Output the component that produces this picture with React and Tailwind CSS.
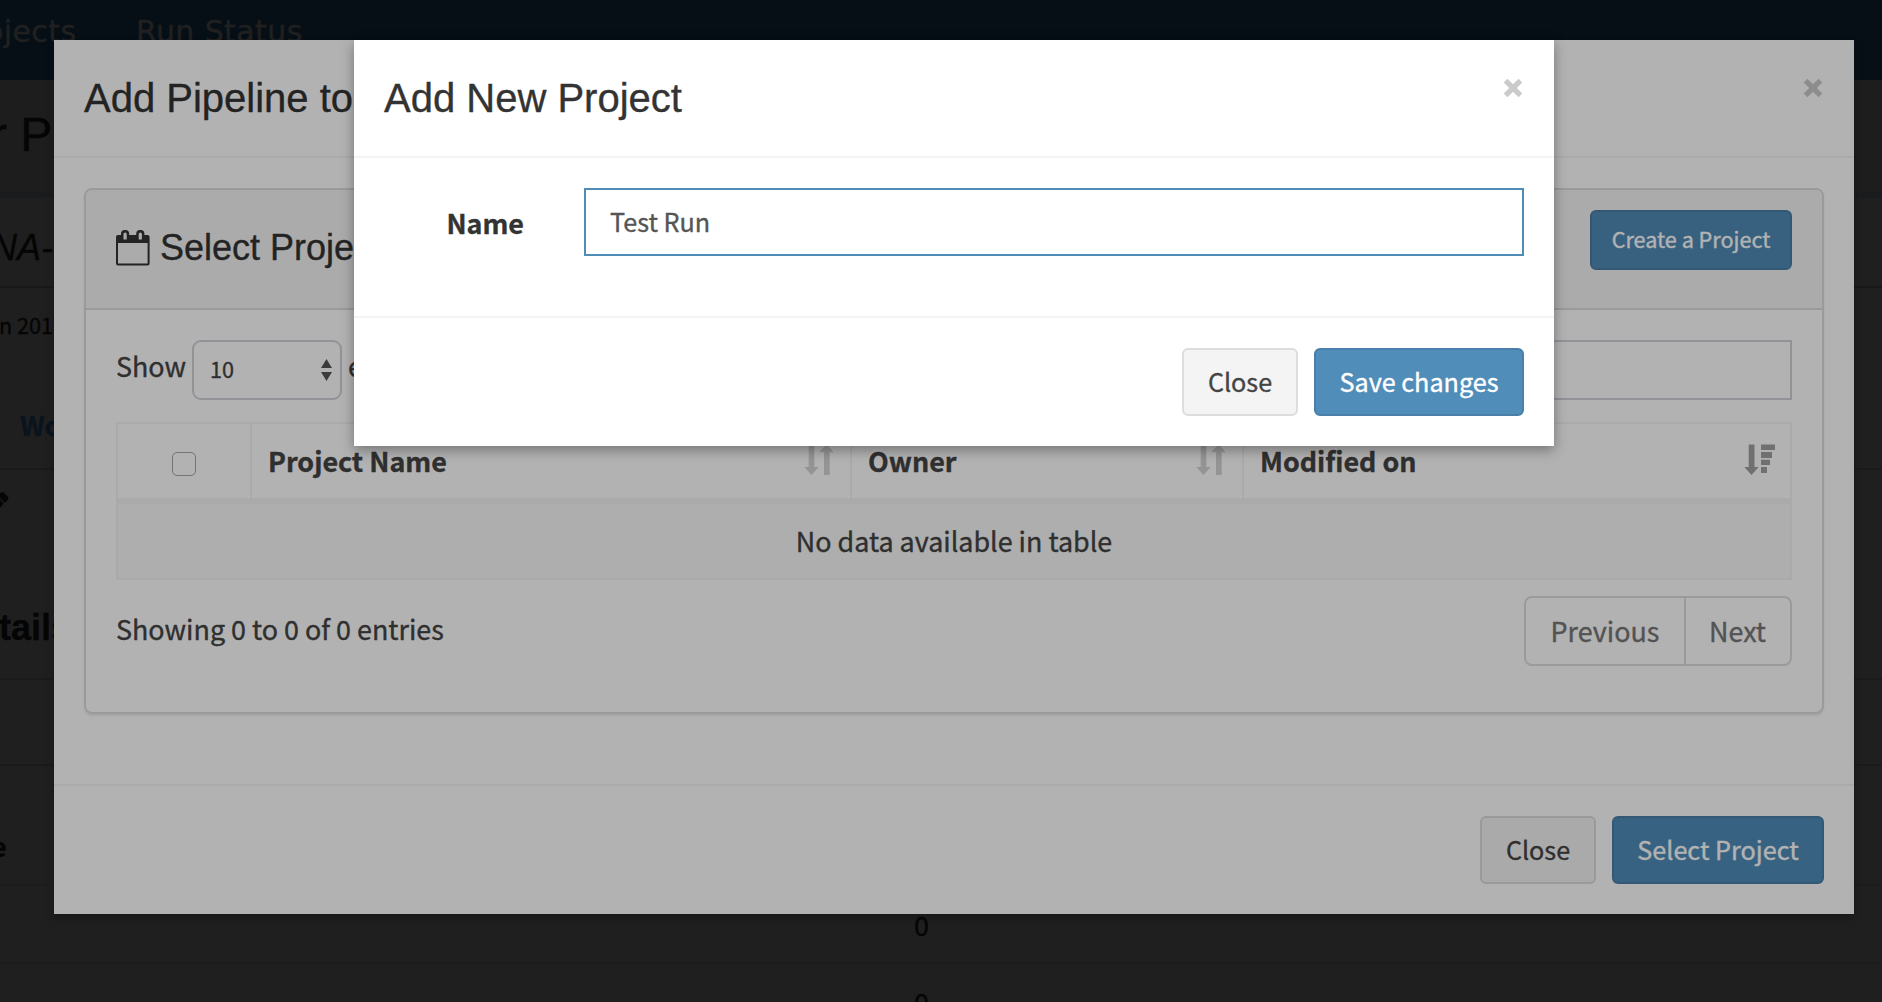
const body = "font-['Noto_Sans_CJK_SC','Noto_Sans',sans-serif]";
const heading = "font-['Liberation_Sans',Arial,sans-serif]";

function CloseIcon() {
  return (
    <svg width="20" height="20" viewBox="0 0 20 20" className="mt-[8px] mr-[1px]">
      <path d="M2.600 2.600 L17.400 17.400 M17.400 2.600 L2.600 17.400" stroke="#cbcbcb" strokeWidth="5.400" strokeLinecap="butt" />
    </svg>
  );
}

function CalendarIcon() {
  return (
    <svg width="34" height="36" viewBox="0 0 34 36" className="mr-[10px]">
      <path
        fill="#333"
        fillRule="evenodd"
        d="M2 5h3V4a4.1 4.1 0 0 1 8.2 0v1h7V4a4.1 4.1 0 0 1 8.2 0v1h3.2a2 2 0 0 1 2 2v26.600a2 2 0 0 1-2 2H2a2 2 0 0 1-2-2V7a2 2 0 0 1 2-2zM2 13v20.500h29.600V13zM7.500 4v5.500h3.200V4a1.600 1.600 0 0 0-3.200 0zM22.700 4v5.500h3.200V4a1.600 1.600 0 0 0-3.200 0z"
      />
    </svg>
  );
}

function SortIcon() {
  return (
    <svg width="30" height="31" viewBox="0 0 30 31" fill="#d4d4d4" className="mr-[2px] mb-[4px]">
      <path d="M4.700 0h5.600v23h4.500L7.500 31 .300 23h4.400z" />
      <path d="M22.500 0l7.200 8.300h-4V31H20V8.300h-4.700z" />
    </svg>
  );
}

function SortDescIcon() {
  return (
    <svg width="31" height="31" viewBox="0 0 31 31" fill="#a1a1a1" className="mb-[4px]">
      <path d="M4.700.500h5.800V23h4.200L7.500 31 .300 23h4.400z" />
      <path d="M17 .500h14V6H17zM17 8h11v6H17zM17 15.700h9V21H17zM17 23h6v6h-6z" />
    </svg>
  );
}

function Page() {
  return (
    <div className="flex h-[1002px] w-full flex-col overflow-hidden bg-[#2d2d2d] whitespace-nowrap text-[#080808]">
      <div className="flex h-20 shrink-0 bg-[#0a1620] font-['DejaVu_Sans',Verdana,sans-serif] text-[30px] leading-[63px] tracking-[0.4px] text-[#2f2f2f]">
        <span className="-ml-[15px] w-[151px] shrink-0">ojects</span>
        <span>Run Status</span>
      </div>
      <div className={`h-28 shrink-0 bg-[#2a2a2a] pr-2 text-[48px] leading-[110px] ${heading}`}>
        <span className="-ml-[9px]">r P</span>
      </div>
      <div className="h-[6px] shrink-0 bg-[#26282a]" />
      <div className={`h-[90px] shrink-0 border-b-2 border-[#242424] text-[36px] leading-[99px] italic ${heading}`}>
        <span className="-ml-[9px]">NA-</span>
      </div>
      <div className={`flex h-[182px] shrink-0 flex-col border-b-2 border-[#262626] ${body}`}>
        <span className="mt-[17px] -ml-[1px] text-[21.6px] leading-10">n 201</span>
        <span className="mt-[60px] pl-5 text-[26.9px] leading-10 font-bold text-[#0f1c2b]">Wo</span>
      </div>
      <div className="flex h-[210px] shrink-0 flex-col border-b-2 border-[#262626]">
        <svg width="10" height="20" viewBox="0 0 10 20" className="mt-[20px]" fill="#080808">
          <path d="M0 3.500L1.500 2.300Q2.800 1.500 4 2.700L8 6.800Q9 8.200 8 9.400L4.700 13L0 8z" />
          <path d="M0 9.500L3.500 13.500L0 18z" />
        </svg>
        <span className={`mt-[98px] -ml-[1px] text-[36px] leading-10 font-bold ${heading}`}>tails</span>
      </div>
      <div className="h-[86px] shrink-0 border-b-2 border-[#262626]" />
      <div className={`h-[120px] shrink-0 border-b-2 border-[#2a2a2a] text-[26.9px] leading-[160px] font-bold ${body}`}>
        <span className="-ml-[9px]">e</span>
      </div>
      <div className={`h-[78px] shrink-0 border-b-2 border-[#2a2a2a] pl-[914px] text-[26.9px] leading-[77px] ${body}`}>0</div>
      <div className={`h-[76px] shrink-0 pl-[914px] text-[26.9px] leading-[76px] ${body}`}>0</div>
    </div>
  );
}

function ModalHeader({ title }) {
  return (
    <div className="flex h-[118px] justify-between border-b-2 border-[#f4f4f4] px-[30px] pt-[30px]">
      <h4 className={`text-[40px] leading-[56px] text-[#333] ${heading}`}>{title}</h4>
      <CloseIcon />
    </div>
  );
}

function ModalFooter({ action, actionWidth }) {
  return (
    <div className="flex h-[130px] justify-end gap-4 border-t-2 border-[#f4f4f4] px-[30px] pt-[30px] text-[25.2px]">
      <button className="flex h-[68px] w-[116px] items-center justify-center rounded-md border-2 border-[#ddd] bg-[#f4f4f4] text-[#444]">
        Close
      </button>
      <button className={`flex h-[68px] items-center justify-center rounded-md border-2 border-[#497fa9] bg-[#508db9] text-white ${actionWidth}`}>
        {action}
      </button>
    </div>
  );
}

function HeadCell({ children, icon }) {
  return (
    <div className="flex h-[74px] items-center justify-between border-r-2 border-[#f4f4f4] pr-[14px] pl-4 font-bold last:border-r-0 last:pr-[15px]">
      {children}
      {icon}
    </div>
  );
}

function ProjectTable() {
  return (
    <div className="mt-[22px] border-2 border-[#f4f4f4]">
      <div className="grid grid-cols-[134px_600px_392px_1fr] border-b-[6px] border-[#f4f4f4]">
        <div className="flex h-[74px] items-center justify-center border-r-2 border-[#f4f4f4] pt-[6px]">
          <div className="size-6 rounded-[5px] border-[1.5px] border-[#a8a8a8] bg-white" />
        </div>
        <HeadCell icon={<SortIcon />}>Project Name</HeadCell>
        <HeadCell icon={<SortIcon />}>Owner</HeadCell>
        <HeadCell icon={<SortDescIcon />}>Modified on</HeadCell>
      </div>
      <div className="flex h-[74px] items-center justify-center bg-[#f9f9f9]">No data available in table</div>
    </div>
  );
}

function PipelineModal() {
  return (
    <div className={`absolute top-10 left-[54px] w-[1800px] bg-white text-[26.9px] whitespace-nowrap text-[#444] shadow-[0_4px_8px_rgba(0,0,0,0.25)] ${body}`}>
      <ModalHeader title="Add Pipeline to" />
      <div className="px-[30px] pt-[30px] pb-[70px]">
        <div className="overflow-hidden rounded-lg border-2 border-[#ddd] shadow-[0_2px_2px_rgba(0,0,0,0.08)]">
          <div className="flex h-[120px] items-start justify-between border-b-2 border-[#ddd] bg-[#f5f5f5] px-[30px]">
            <div className="flex h-[115px] items-center">
              <CalendarIcon />
              <h3 className={`text-[36px] leading-10 text-[#333] ${heading}`}>Select Proje</h3>
            </div>
            <button className="mt-5 flex h-[60px] w-[202px] items-center justify-center rounded-md border-2 border-[#497fa9] bg-[#518cb8] pb-[1px] text-[21.6px] text-white">
              Create a Project
            </button>
          </div>
          <div className="px-[30px] pt-[30px] pb-[46px]">
            <div className="flex h-[60px] justify-between">
              <div className="flex">
                <span className="w-19 leading-[52px]">Show</span>
                <div className="flex h-[60px] w-[150px] items-center justify-between rounded-[9px] border-2 border-[#d2d2dc] pr-2 pb-[2px] pl-4 text-[21.6px]">
                  10
                  <svg width="11" height="22" viewBox="0 0 11 22" fill="#555" className="mt-[2px]">
                    <path d="M5.500 0L11 9H0zM0 13h11L5.500 22z" />
                  </svg>
                </div>
                <span className="ml-[6px] leading-[52px]">e</span>
              </div>
              <div className="h-[60px] w-[300px] border-2 border-[#d2d2dc]" />
            </div>
            <ProjectTable />
            <div className="mt-4 flex justify-between">
              <span className="leading-[66px]">Showing 0 to 0 of 0 entries</span>
              <div className="flex h-[70px] rounded-lg border-2 border-[#ddd] text-[#777]">
                <span className="flex w-[160px] items-center justify-center border-r-2 border-[#ddd]">Previous</span>
                <span className="flex w-[104px] items-center justify-center pr-[1px]">Next</span>
              </div>
            </div>
          </div>
        </div>
      </div>
      <ModalFooter action="Select Project" actionWidth="w-[212px]" />
    </div>
  );
}

function ProjectModal() {
  return (
    <div className={`absolute top-10 left-[354px] w-[1200px] bg-white text-[26.9px] whitespace-nowrap text-[#333] shadow-[0_4px_12px_rgba(0,0,0,0.35)] ${body}`}>
      <ModalHeader title="Add New Project" />
      <div className="flex h-[158px] px-[30px] pt-[30px]">
        <label className="w-[141px] pr-[1px] text-right leading-[69px] font-bold">Name</label>
        <input
          className="ml-[59px] h-[68px] flex-1 border-2 border-[#4f8cb8] bg-white pb-[2px] pl-6 text-[25.2px] text-[#555] outline-none"
          defaultValue="Test Run"
        />
      </div>
      <ModalFooter action="Save changes" actionWidth="w-[210px]" />
    </div>
  );
}

export default function App() {
  return (
    <div className="relative h-[1002px] w-full overflow-hidden [-webkit-text-stroke:0.35px]">
      <Page />
      <PipelineModal />
      <div className="absolute inset-0 bg-black/30" />
      <ProjectModal />
    </div>
  );
}
